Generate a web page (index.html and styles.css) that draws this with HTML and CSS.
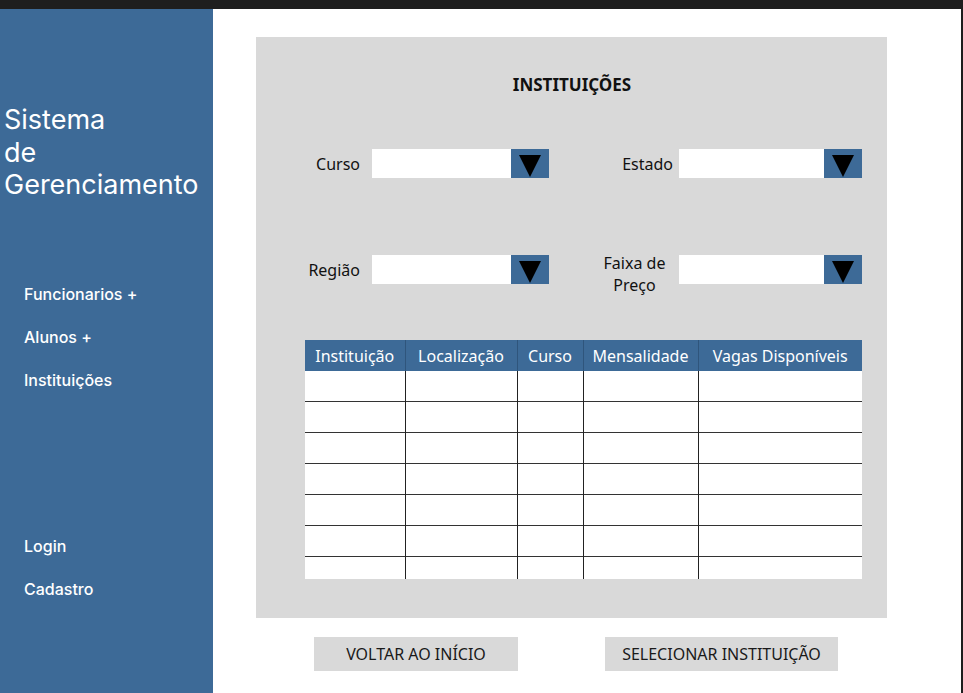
FILE: index.html
```html
<!DOCTYPE html>
<html lang="pt-BR">
<head>
<meta charset="utf-8">
<title>Sistema de Gerenciamento - Instituições</title>
<link rel="stylesheet" href="styles.css">
</head>
<body>
<div class="topbar"></div>
<div class="layout">
  <aside class="sidebar">
    <div class="brand">Sistema<br>de<br>Gerenciamento</div>
    <nav class="menu">
      <a class="menu-item">Funcionarios +</a>
      <a class="menu-item">Alunos +</a>
      <a class="menu-item">Instituições</a>
    </nav>
    <nav class="menu menu-bottom">
      <a class="menu-item">Login</a>
      <a class="menu-item">Cadastro</a>
    </nav>
  </aside>
  <main class="main">
    <section class="panel">
      <h1 class="title">INSTITUIÇÕES</h1>
      <div class="filters">
        <div class="filter-row">
          <div class="filter filter-left">
            <span class="label">Curso</span>
            <div class="select select-left"><span class="select-field"></span><span class="select-arrow"><svg width="22" height="22" viewBox="0 0 22 22"><polygon points="0,0 22,0 11,22" fill="#000"/></svg></span></div>
          </div>
          <div class="filter filter-right">
            <span class="label">Estado</span>
            <div class="select select-right"><span class="select-field"></span><span class="select-arrow"><svg width="22" height="22" viewBox="0 0 22 22"><polygon points="0,0 22,0 11,22" fill="#000"/></svg></span></div>
          </div>
        </div>
        <div class="filter-row filter-row-2">
          <div class="filter filter-left">
            <span class="label">Região</span>
            <div class="select select-left"><span class="select-field"></span><span class="select-arrow"><svg width="22" height="22" viewBox="0 0 22 22"><polygon points="0,0 22,0 11,22" fill="#000"/></svg></span></div>
          </div>
          <div class="filter filter-right">
            <span class="label label-two">Faixa de<br>Preço</span>
            <div class="select select-right"><span class="select-field"></span><span class="select-arrow"><svg width="22" height="22" viewBox="0 0 22 22"><polygon points="0,0 22,0 11,22" fill="#000"/></svg></span></div>
          </div>
        </div>
      </div>
      <table class="grid">
        <thead>
          <tr>
            <th class="c1">Instituição</th>
            <th class="c2">Localização</th>
            <th class="c3">Curso</th>
            <th class="c4">Mensalidade</th>
            <th class="c5">Vagas Disponíveis</th>
          </tr>
        </thead>
        <tbody>
          <tr><td></td><td></td><td></td><td></td><td></td></tr>
          <tr><td></td><td></td><td></td><td></td><td></td></tr>
          <tr><td></td><td></td><td></td><td></td><td></td></tr>
          <tr><td></td><td></td><td></td><td></td><td></td></tr>
          <tr><td></td><td></td><td></td><td></td><td></td></tr>
          <tr><td></td><td></td><td></td><td></td><td></td></tr>
          <tr class="last"><td></td><td></td><td></td><td></td><td></td></tr>
        </tbody>
      </table>
    </section>
    <div class="actions">
      <button class="btn btn-back">VOLTAR AO INÍCIO</button>
      <button class="btn btn-select">SELECIONAR INSTITUIÇÃO</button>
    </div>
  </main>
</div>
</body>
</html>
```

FILE: styles.css
```css
* { box-sizing: border-box; }

html, body {
  margin: 0;
  padding: 0;
  width: 963px;
  height: 693px;
  overflow: hidden;
  background: #ffffff;
}

body {
  font-family: "Noto Sans", "Open Sans", sans-serif;
  color: #111;
}

.topbar {
  height: 9px;
  background: #1e1e1e;
}

.layout {
  display: flex;
  height: 684px;
}

.sidebar {
  width: 213px;
  flex: none;
  background: #3d6a97;
  color: #fff;
  font-family: Inter, "Liberation Sans", sans-serif;
  padding: 95px 0 0 0;
  display: flex;
  flex-direction: column;
}

.brand {
  font-size: 27px;
  line-height: 32.5px;
  padding-left: 4px;
}

.menu {
  display: flex;
  flex-direction: column;
  gap: 23px;
  padding-left: 24px;
  margin-top: 82px;
}

.menu-bottom {
  margin-top: 146px;
}

.menu-item {
  font-size: 16px;
  line-height: 20px;
  color: #fff;
  font-weight: 500;
}

.main {
  flex: 1;
  background: #fff;
  border-right: 2px solid #1e1e1e;
  padding: 28px 0 0 43px;
}

.panel {
  width: 631px;
  height: 581px;
  background: #d9d9d9;
  padding: 37px 25px 0 49px;
}

.title {
  margin: 0;
  font-size: 17px;
  font-weight: 700;
  line-height: 22px;
  text-align: center;
  padding-right: 23px;
}

.filters {
  margin-top: 53px;
  display: flex;
  flex-direction: column;
  gap: 77px;
}

.filter-row {
  display: flex;
  height: 29px;
  gap: 47px;
}

.filter {
  display: flex;
  align-items: flex-start;
}

.filter-left { gap: 12px; }
.filter-right { gap: 6px; }

.label {
  font-size: 16px;
  line-height: 29px;
  text-align: right;
  white-space: nowrap;
  padding-top: 1px;
}

.filter-left .label { width: 55px; }
.filter-right .label { width: 77px; }

.label-two {
  line-height: 22px;
  text-align: center !important;
  margin-top: -4px;
}

.select {
  display: flex;
  height: 29px;
}

.select-left { width: 177px; }
.select-right { width: 183px; }

.select-field {
  flex: 1;
  background: #fff;
}

.select-arrow {
  width: 38px;
  background: #3d6a97;
  display: flex;
  justify-content: center;
  align-items: flex-start;
  padding-top: 6px;
}

.select-arrow svg { display: block; }

.grid {
  margin-top: 56px;
  width: 557px;
  border-collapse: collapse;
  table-layout: fixed;
  background: #fff;
}

.grid th {
  background: #3d6a97;
  color: #fff;
  font-weight: 400;
  font-size: 16px;
  height: 31px;
  padding: 0;
  text-align: center;
  white-space: nowrap;
  border-left: 1px solid #2f557c;
}

.grid th:first-child { border-left: none; }

.c1 { width: 100px; }
.c2 { width: 112px; }
.c3 { width: 66px; }
.c4 { width: 115px; }
.c5 { width: 164px; }

.grid td {
  height: 31px;
  padding: 0;
  border-left: 1px solid #222;
  border-top: 1px solid #333;
}

.grid td:first-child { border-left: none; }

.grid tbody tr:first-child td { border-top: none; height: 30px; }

.grid tr.last td { height: 23px; }

.actions {
  display: flex;
  gap: 87px;
  margin-top: 19px;
  padding-left: 58px;
}

.btn {
  height: 34px;
  border: none;
  background: #d9d9d9;
  font-family: "Noto Sans", "Open Sans", sans-serif;
  font-size: 16px;
  color: #1a1a1a;
  padding: 0;
}

.btn-back { width: 204px; }
.btn-select { width: 233px; }
```
